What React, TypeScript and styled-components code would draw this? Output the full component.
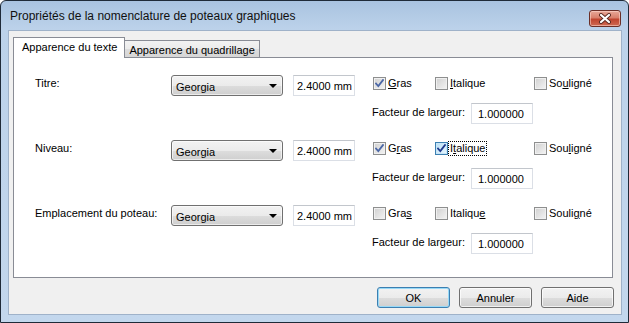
import React from "react";
import styled, { createGlobalStyle, css } from "styled-components";

const GlobalStyle = createGlobalStyle`
  html, body { margin: 0; padding: 0; background: #ffffff; }
  body { font-family: "Liberation Sans", Arial, sans-serif; font-size: 11px; color: #000; }
  * { box-sizing: border-box; }
`;

const Window = styled.div`
  width: 629px;
  height: 323px;
  border: 1px solid #1f2a38;
  border-radius: 6px 6px 0 0;
  background: linear-gradient(to bottom, #a9c3e0 0px, #bcd2ea 28px, #c3d7ed 100%);
  display: flex;
  flex-direction: column;
  overflow: hidden;
`;

const TitleBar = styled.div`
  height: 29px;
  flex: none;
  display: flex;
  align-items: center;
  justify-content: space-between;
  padding: 0 7px 0 9px;
`;

const Title = styled.span`
  font-family: "Liberation Sans", Arial, sans-serif;
  font-size: 12px;
  color: #101010;
  margin-top: 1px;
`;

const CloseButton = styled.div`
  align-self: flex-start;
  margin-top: 9px;
  width: 32px;
  height: 17px;
  border: 1px solid #6b2f27;
  border-radius: 3px;
  background: linear-gradient(to bottom, #e8a898 0%, #d9806b 45%, #c0452f 55%, #cf6a52 100%);
  box-shadow: inset 0 0 0 1px rgba(255, 220, 210, 0.55);
  display: flex;
  align-items: center;
  justify-content: center;
`;

const Client = styled.div`
  flex: 1;
  margin: 0 6px 7px 7px;
  background: #f0f0f0;
  border: 1px solid #9fb2c9;
  display: flex;
  flex-direction: column;
  padding: 6px 7px 0 4px;
`;

const TabStrip = styled.div`
  display: flex;
  align-items: flex-end;
  height: 20px;
  position: relative;
  z-index: 1;
`;

const Tab = styled.div<{ $active?: boolean }>`
  font-size: 11px;
  border: 1px solid #898c95;
  border-bottom: none;
  display: flex;
  align-items: center;
  white-space: nowrap;
  ${(p) =>
    p.$active
      ? css`
          height: 21px;
          margin-bottom: -1px;
          background: #ffffff;
          padding: 0 7px 2px 8px;
        `
      : css`
          height: 17px;
          margin-left: -1px;
          background: linear-gradient(to bottom, #f2f2f2 0%, #ebebeb 50%, #dddddd 51%, #d6d6d6 100%);
          padding: 1px 4px 0 4px;
        `}
`;

const Panel = styled.div`
  height: 221px;
  flex: none;
  margin-right: 1px;
  background: #ffffff;
  border: 1px solid #898c95;
  display: flex;
  flex-direction: column;
  padding: 17px 0 0 21px;
`;

const FontRow = styled.div`
  display: flex;
  align-items: flex-start;
  height: 65px;
  flex: none;
`;

const RowLabel = styled.div`
  width: 136px;
  padding-top: 2px;
  line-height: 13px;
`;

const Combo = styled.div`
  width: 112px;
  height: 21px;
  border: 1px solid #707070;
  border-radius: 3px;
  background: linear-gradient(to bottom, #f2f2f2 0%, #ebebeb 50%, #dddddd 51%, #cfcfcf 100%);
  box-shadow: inset 0 0 0 1px rgba(255, 255, 255, 0.6);
  display: flex;
  align-items: center;
  justify-content: space-between;
  padding: 2px 5px 0 4px;
`;

const Arrow = styled.span`
  width: 0;
  height: 0;
  border-left: 4px solid transparent;
  border-right: 4px solid transparent;
  border-top: 4px solid #000;
  margin-bottom: 2px;
`;

const TextField = styled.div<{ $w: number; $pad: number }>`
  width: ${(p) => p.$w}px;
  height: 21px;
  border: 1px solid #dbdfe6;
  border-top-color: #c2c6cc;
  background: #fff;
  display: flex;
  align-items: center;
  padding: 1px 0 0 ${(p) => p.$pad}px;
  white-space: nowrap;
`;

const SizeField = styled(TextField)`
  margin-left: 10px;
`;

const Options = styled.div`
  display: flex;
  flex-direction: column;
  margin-left: 17px;
`;

const CheckLine = styled.div`
  display: flex;
  margin-top: 2px;
  height: 13px;
`;

const CheckGroup = styled.label<{ $w?: number }>`
  display: flex;
  align-items: center;
  margin-left: 1px;
  width: ${(p) => (p.$w ? `${p.$w}px` : "auto")};
  line-height: 13px;
`;

const Box = styled.span<{ $hot?: boolean }>`
  width: 13px;
  height: 13px;
  flex: none;
  border: 1px solid ${(p) => (p.$hot ? "#3c7fb1" : "#8e8f8f")};
  background: ${(p) =>
    p.$hot
      ? "linear-gradient(135deg, #b9dff6 0%, #e9f7fe 100%)"
      : "linear-gradient(135deg, #d0d0d0 0%, #f4f4f4 100%)"};
  box-shadow: inset 0 0 0 1px ${(p) => (p.$hot ? "#c8e6f8" : "#f0f0f0")};
  display: flex;
  align-items: center;
  justify-content: center;
`;

const CheckText = styled.span<{ $focus?: boolean }>`
  padding: 0 1px;
  border: 1px dotted ${(p) => (p.$focus ? "#000" : "transparent")};
`;

const Key = styled.u`
  text-decoration: underline;
  text-underline-offset: 1px;
`;

const FactorLine = styled.div`
  display: flex;
  align-items: center;
  margin-top: 13px;
`;

const FactorLabel = styled.span`
  width: 99px;
  margin-top: -3px;
`;

const ButtonRow = styled.div`
  display: flex;
  justify-content: flex-end;
  gap: 9px;
  margin-top: 9px;
`;

const Button = styled.div<{ $default?: boolean }>`
  width: 73px;
  height: 21px;
  border: 1px solid ${(p) => (p.$default ? "#3c7fb1" : "#707070")};
  border-radius: 3px;
  background: linear-gradient(to bottom, #f2f2f2 0%, #ebebeb 50%, #dddddd 51%, #cfcfcf 100%);
  box-shadow: inset 0 0 0 1px ${(p) => (p.$default ? "#97d9f7" : "rgba(255,255,255,0.7)")};
  display: flex;
  align-items: center;
  justify-content: center;
  padding-top: 1px;
`;

const Check = ({ hot }: { hot?: boolean }) => (
  <svg width="9" height="9" viewBox="0 0 9 9">
    <path
      d="M1 4.5 L3.3 7 L8 1"
      fill="none"
      stroke={hot ? "#1f3a8c" : "#4b67a6"}
      strokeWidth="1.8"
      strokeLinecap="square"
    />
  </svg>
);

type Opt = { checked?: boolean; hot?: boolean; focus?: boolean; text: [string, string, string] };

const Option = ({ o, w }: { o: Opt; w?: number }) => (
  <CheckGroup $w={w}>
    <Box $hot={o.hot}>{o.checked && <Check hot={o.hot} />}</Box>
    <CheckText $focus={o.focus}>
      {o.text[0]}
      <Key>{o.text[1]}</Key>
      {o.text[2]}
    </CheckText>
  </CheckGroup>
);

const rows: { label: string; opts: [Opt, Opt, Opt] }[] = [
  {
    label: "Titre:",
    opts: [
      { checked: true, text: ["", "G", "ras"] },
      { text: ["", "I", "talique"] },
      { text: ["So", "u", "ligné"] },
    ],
  },
  {
    label: "Niveau:",
    opts: [
      { checked: true, text: ["G", "r", "as"] },
      { checked: true, hot: true, focus: true, text: ["I", "t", "alique"] },
      { text: ["Sou", "l", "igné"] },
    ],
  },
  {
    label: "Emplacement du poteau:",
    opts: [
      { text: ["Gra", "s", ""] },
      { text: ["Italiqu", "e", ""] },
      { text: ["Souli", "g", "né"] },
    ],
  },
];

const CloseGlyph = () => (
  <svg width="14" height="11" viewBox="0 0 14 11">
    <path d="M3 2 L11 9 M11 2 L3 9" stroke="#5a2a22" strokeWidth="4" strokeLinecap="round" />
    <path d="M3 2 L11 9 M11 2 L3 9" stroke="#ffffff" strokeWidth="2.2" strokeLinecap="round" />
  </svg>
);

export default function App() {
  return (
    <>
      <GlobalStyle />
      <Window>
        <TitleBar>
          <Title>Propriétés de la nomenclature de poteaux graphiques</Title>
          <CloseButton>
            <CloseGlyph />
          </CloseButton>
        </TitleBar>
        <Client>
          <TabStrip>
            <Tab $active>Apparence du texte</Tab>
            <Tab>Apparence du quadrillage</Tab>
          </TabStrip>
          <Panel>
            {rows.map((r) => (
              <FontRow key={r.label}>
                <RowLabel>{r.label}</RowLabel>
                <Combo>
                  <span>Georgia</span>
                  <Arrow />
                </Combo>
                <SizeField $w={62} $pad={3}>
                  2.4000 mm
                </SizeField>
                <Options>
                  <CheckLine>
                    <Option o={r.opts[0]} w={61} />
                    <Option o={r.opts[1]} w={98} />
                    <Option o={r.opts[2]} />
                  </CheckLine>
                  <FactorLine>
                    <FactorLabel>Facteur de largeur:</FactorLabel>
                    <TextField $w={62} $pad={6}>
                      1.000000
                    </TextField>
                  </FactorLine>
                </Options>
              </FontRow>
            ))}
          </Panel>
          <ButtonRow>
            <Button $default>OK</Button>
            <Button>Annuler</Button>
            <Button>Aide</Button>
          </ButtonRow>
        </Client>
      </Window>
    </>
  );
}
